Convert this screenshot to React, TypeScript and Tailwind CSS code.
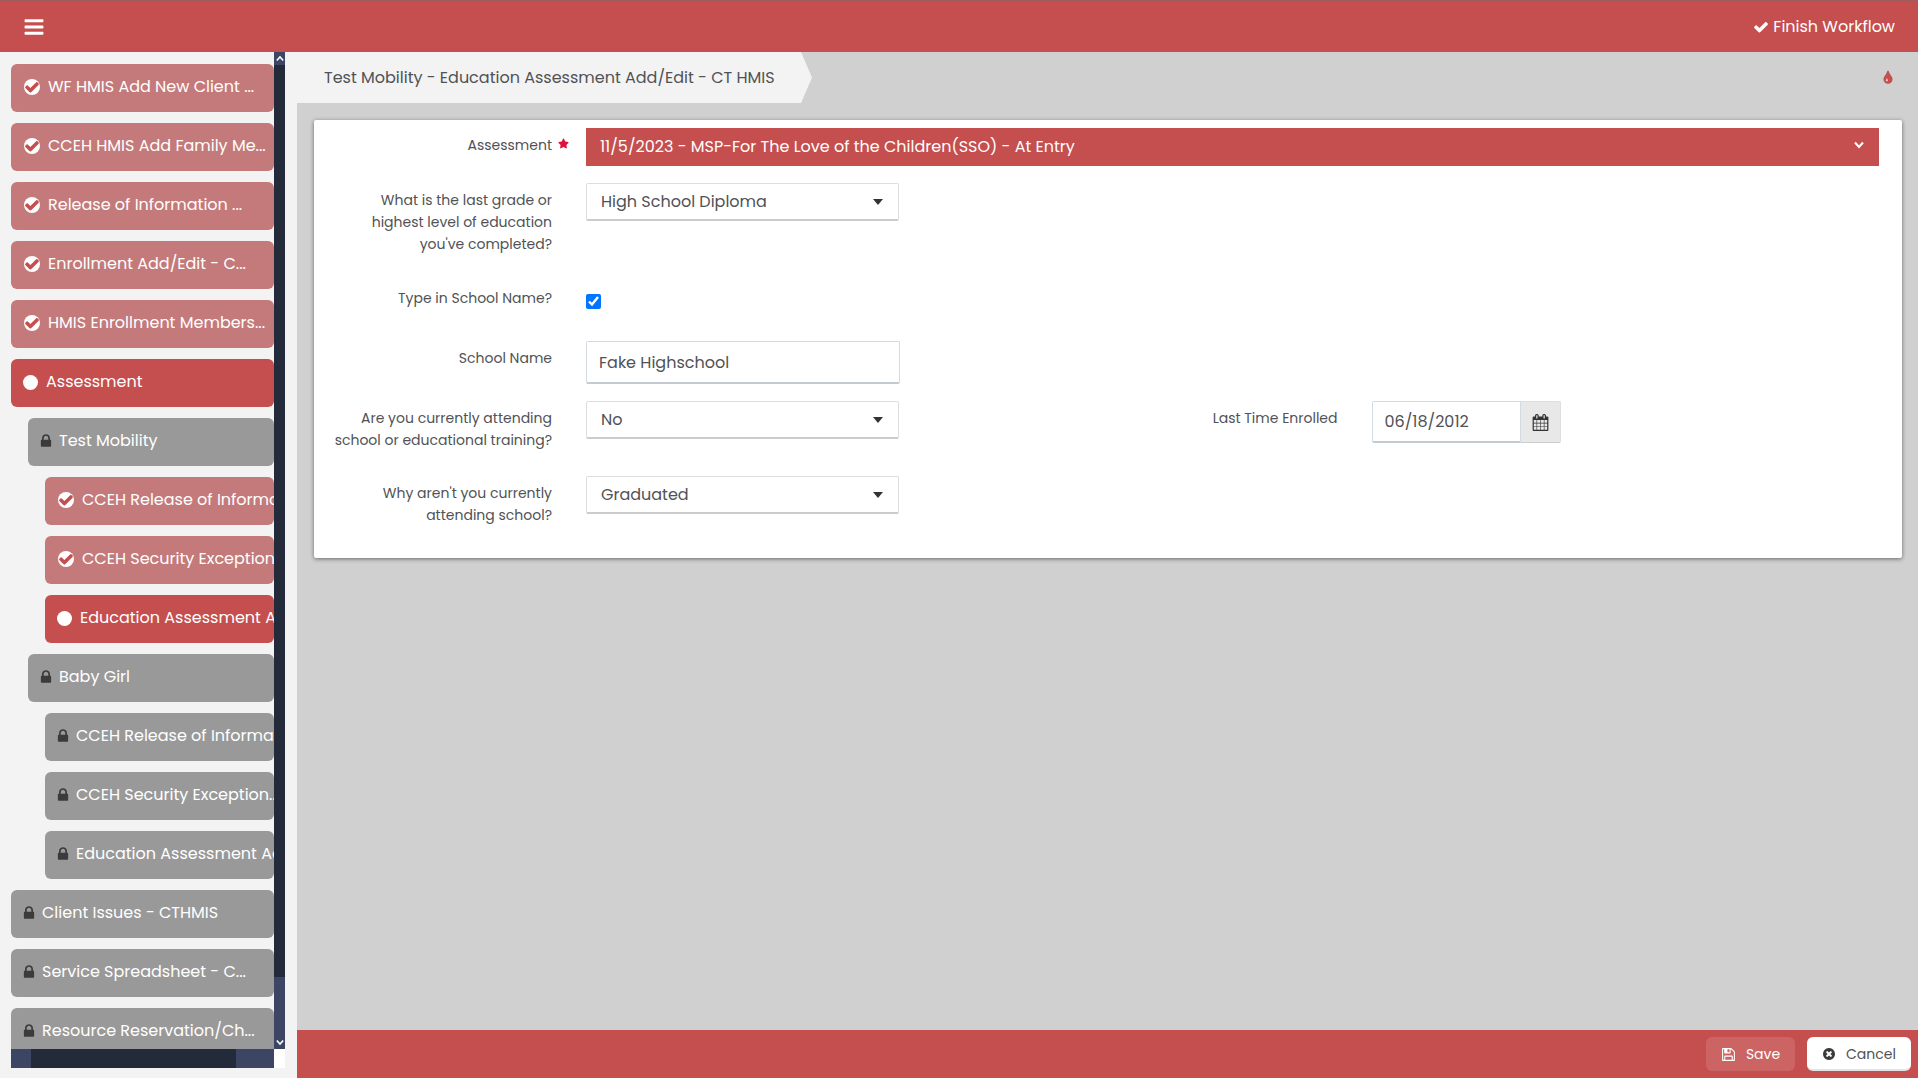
import type { ReactNode } from "react";
import clsx from "clsx";
import { FaStar } from "react-icons/fa";

type StepStatus = "done" | "active" | "locked";

type Step = {
  label: string;
  status: StepStatus;
  level: 0 | 1 | 2;
};

const steps: Step[] = [
  { label: "WF HMIS Add New Client ...", status: "done", level: 0 },
  { label: "CCEH HMIS Add Family Me...", status: "done", level: 0 },
  { label: "Release of Information ...", status: "done", level: 0 },
  { label: "Enrollment Add/Edit - C...", status: "done", level: 0 },
  { label: "HMIS Enrollment Members...", status: "done", level: 0 },
  { label: "Assessment", status: "active", level: 0 },
  { label: "Test Mobility", status: "locked", level: 1 },
  { label: "CCEH Release of Informa...", status: "done", level: 2 },
  { label: "CCEH Security Exception...", status: "done", level: 2 },
  { label: "Education Assessment Ad...", status: "active", level: 2 },
  { label: "Baby Girl", status: "locked", level: 1 },
  { label: "CCEH Release of Informa...", status: "locked", level: 2 },
  { label: "CCEH Security Exception...", status: "locked", level: 2 },
  { label: "Education Assessment Ad...", status: "locked", level: 2 },
  { label: "Client Issues - CTHMIS", status: "locked", level: 0 },
  { label: "Service Spreadsheet - C...", status: "locked", level: 0 },
  { label: "Resource Reservation/Ch...", status: "locked", level: 0 },
];

const paths = {
  bars: "M1664 1344v128q0 26-19 45t-45 19h-1408q-26 0-45-19t-19-45v-128q0-26 19-45t45-19h1408q26 0 45 19t19 45zm0-512v128q0 26-19 45t-45 19h-1408q-26 0-45-19t-19-45v-128q0-26 19-45t45-19h1408q26 0 45 19t19 45zm0-512v128q0 26-19 45t-45 19h-1408q-26 0-45-19t-19-45v-128q0-26 19-45t45-19h1408q26 0 45 19t19 45z",
  check:
    "M1671 566q0 40-28 68l-724 724-136 136q-28 28-68 28t-68-28l-136-136-362-362q-28-28-28-68t28-68l136-136q28-28 68-28t68 28l294 295 656-657q28-28 68-28t68 28l136 136q28 28 28 68z",
  lock: "M640 768h512v-192q0-106-75-181t-181-75-181 75-75 181v192zm832 96v576q0 40-28 68t-68 28h-960q-40 0-68-28t-28-68v-576q0-40 28-68t68-28h32v-192q0-184 132-316t316-132 316 132 132 316v192h32q40 0 68 28t28 68z",
  tint: "M896 1152q0-36-20-69-1-1-15.5-22.5t-25.5-38-25-44-21-50.5q-4-16-21-16t-21 16q-7 23-21 50.5t-25 44-25.5 38-15.5 22.5q-20 33-20 69 0 53 37.5 90.5t90.5 37.5 90.5-37.5 37.5-90.5zm512-128q0 212-150 362t-362 150-362-150-150-362q0-145 81-275 6-9 62.5-90.5t101-151 99.5-178 83-201.5q9-30 34-47t51-17 51.5 17 33.5 47q28 93 83 201.5t99.5 178 101 151 62.5 90.5q81 127 81 275z",
  calendar:
    "M192 1664h288v-288h-288v288zm352 0h320v-288h-320v288zm-352-352h288v-320h-288v320zm352 0h320v-320h-320v320zm-352-384h288v-288h-288v288zm736 736h320v-288h-320v288zm-384-736h320v-288h-320v288zm768 736h288v-288h-288v288zm-384-352h320v-320h-320v320zm-352-864v-288q0-13-9.5-22.5t-22.5-9.5h-64q-13 0-22.5 9.5t-9.5 22.5v288q0 13 9.5 22.5t22.5 9.5h64q13 0 22.5-9.5t9.5-22.5zm736 864h288v-320h-288v320zm-384-384h320v-288h-320v288zm384 0h288v-288h-288v288zm32-480v-288q0-13-9.5-22.5t-22.5-9.5h-64q-13 0-22.5 9.5t-9.5 22.5v288q0 13 9.5 22.5t22.5 9.5h64q13 0 22.5-9.5t9.5-22.5zm384-64v1280q0 52-38 90t-90 38h-1408q-52 0-90-38t-38-90v-1280q0-52 38-90t90-38h128v-96q0-66 47-113t113-47h64q66 0 113 47t47 113v96h384v-96q0-66 47-113t113-47h64q66 0 113 47t47 113v96h128q52 0 90 38t38 90z",
  floppy:
    "M512 1536h768v-384h-768v384zm896 0h128v-896q0-14-10-38.5t-20-34.5l-281-281q-10-10-34-20t-39-10v416q0 40-28 68t-68 28h-576q-40 0-68-28t-28-68v-416h-128v1280h128v-416q0-40 28-68t68-28h832q40 0 68 28t28 68v416zm-384-928v-320q0-13-9.5-22.5t-22.5-9.5h-192q-13 0-22.5 9.5t-9.5 22.5v320q0 13 9.5 22.5t22.5 9.5h192q13 0 22.5-9.5t9.5-22.5zm640 32v928q0 40-28 68t-68 28h-1344q-40 0-68-28t-28-68v-1344q0-40 28-68t68-28h928q40 0 88 20t76 48l280 280q28 28 48 76t20 88z",
  timesCircle:
    "M1277 1122q0-26-19-45l-181-181 181-181q19-19 19-45 0-27-19-46l-90-90q-19-18-46-18-26 0-45 18l-181 181-181-181q-19-18-45-18-27 0-46 18l-90 90q-19 19-19 46 0 26 19 45l181 181-181 181q-19 19-19 45 0 27 19 46l90 90q19 18 46 18 26 0 45-18l181-181 181 181q19 18 45 18 27 0 46-18l90-90q19-19 19-46zm387-226q0 209-103 385.5t-279.5 279.5-385.5 103-385.5-103-279.5-279.5-103-385.5 103-385.5 279.5-279.5 385.5-103 385.5 103 279.5 279.5 103 385.5z",
};

function Glyph({ name, className }: { name: keyof typeof paths; className?: string }) {
  return (
    <svg viewBox="0 0 1792 1792" fill="currentColor" aria-hidden="true" className={clsx("shrink-0", className)}>
      <path d={paths[name]} />
    </svg>
  );
}

function Chevron({ up, className }: { up?: boolean; className?: string }) {
  return (
    <svg viewBox="0 0 10 8" fill="none" stroke="currentColor" strokeWidth="2" aria-hidden="true" className={className}>
      <path d={up ? "M1 6.5 5 2l4 4.500" : "M1 1.500 5 6l4-4.500"} />
    </svg>
  );
}

function StepIcon({ status }: { status: StepStatus }) {
  if (status === "done") {
    return (
      <span className="flex h-4 w-4 shrink-0 items-center justify-center rounded-full bg-white">
        <Glyph name="check" className="h-4 w-4 text-[#c54e4e]" />
      </span>
    );
  }
  if (status === "active") {
    return <span className="h-[15px] w-[15px] shrink-0 rounded-full bg-white" />;
  }
  return (
    <span className="flex w-[11px] shrink-0 justify-center">
      <Glyph name="lock" className="h-4 w-4 text-[#3b3b3b]" />
    </span>
  );
}

function StepButton({ step }: { step: Step }) {
  return (
    <li
      className={clsx(
        step.level === 1 && "pl-[17px]",
        step.level === 2 && "pl-[34px]",
      )}
    >
      <button
        type="button"
        className={clsx(
          "flex h-12 w-full items-center gap-2 overflow-hidden rounded-md pb-0.5 text-left text-base whitespace-nowrap text-white",
          step.status === "done" && "bg-[#c47a7a] pl-[13px]",
          step.status === "active" && "bg-[#c54e4e] pl-3",
          step.status === "locked" && "bg-[#999999] pl-3",
        )}
      >
        <StepIcon status={step.status} />
        <span>{step.label}</span>
      </button>
    </li>
  );
}

function Sidebar() {
  return (
    <aside className="flex w-[297px] shrink-0 flex-col bg-[#f3f3f3] pb-[10px] pl-[11px]">
      <div className="flex min-h-0 flex-1">
        <nav aria-label="Workflow steps" className="w-[263px] overflow-hidden">
          <ul className="flex flex-col gap-[11px] pt-3">
            {steps.map((step, i) => (
              <StepButton key={i} step={step} />
            ))}
          </ul>
        </nav>
        <div className="flex w-[11px] flex-col items-center bg-[#3c4563] text-white">
          <Chevron up className="my-[3px] h-[7px] w-2" />
          <div className="w-full flex-1 bg-[#232a3a]" />
          <div className="flex h-[72px] items-end pb-[3px]">
            <Chevron className="h-[7px] w-2" />
          </div>
        </div>
      </div>
      <div className="flex h-[19px]">
        <div className="w-[263px] bg-[#3c4563] pr-[38px] pl-5">
          <div className="h-full bg-[#232a3a]" />
        </div>
        <div className="w-[11px] bg-white" />
      </div>
    </aside>
  );
}

function Field({
  id,
  label,
  required,
  children,
}: {
  id: string;
  label: string;
  required?: boolean;
  children: ReactNode;
}) {
  return (
    <div className="flex min-w-0 flex-1 items-start">
      <div className="flex w-[272px] shrink-0 pt-[6px]">
        <label htmlFor={id} className="w-[238px] pl-[15px] text-right text-sm leading-[22px]">
          {label}
        </label>
        {required ? <FaStar className="mt-1 ml-1.5 h-[11px] w-[11px] text-[#dc143c]" /> : null}
      </div>
      {children}
    </div>
  );
}

function Select({ id, value }: { id: string; value: string }) {
  return (
    <div className="relative w-[313px]">
      <select
        id={id}
        defaultValue={value}
        className="h-[38px] w-full appearance-none rounded-xs border border-b-2 border-[#dedede] border-b-[#cccccc] bg-white pr-8 pl-3.5 text-base"
      >
        <option>{value}</option>
      </select>
      <svg
        viewBox="0 0 10 6"
        fill="#333333"
        aria-hidden="true"
        className="pointer-events-none absolute top-4 right-4 h-1.5 w-2.5"
      >
        <path d="M0 0h10L5 6z" />
      </svg>
    </div>
  );
}

function AssessmentForm() {
  return (
    <form className="mt-[17px] mr-4 ml-[17px] flex flex-col rounded-xs bg-white pt-2 pb-8 shadow-[0_1px_4px_rgba(0,0,0,0.5)]">
      <div className="flex pr-[23px]">
        <Field id="assessment" label="Assessment" required>
          <div className="relative flex-1">
            <select
              id="assessment"
              className="h-[38px] w-full appearance-none bg-[#c54e4e] pr-10 pl-3.5 text-base text-white"
            >
              <option>11/5/2023 - MSP-For The Love of the Children(SSO) - At Entry</option>
            </select>
            <Chevron className="pointer-events-none absolute top-[13px] right-[15px] h-2 w-2.5 text-white" />
          </div>
        </Field>
      </div>

      <div className="flex h-[111px] pt-[17px] pr-[17px]">
        <Field id="grade" label="What is the last grade or highest level of education you've completed?">
          <Select id="grade" value="High School Diploma" />
        </Field>
        <div className="flex-1" />
      </div>

      <div className="flex pt-1 pr-[17px]">
        <Field id="type-name" label="Type in School Name?">
          <input id="type-name" type="checkbox" defaultChecked className="mt-[13px] h-[15px] w-[15px] accent-[#0075ff]" />
        </Field>
        <div className="flex-1" />
      </div>

      <div className="flex pt-8 pr-[17px]">
        <Field id="school-name" label="School Name">
          <input
            id="school-name"
            type="text"
            defaultValue="Fake Highschool"
            className="h-[43px] w-[314px] rounded-xs border border-b-2 border-[#d3dae3] border-b-[#c2cad4] px-3 text-base"
          />
        </Field>
        <div className="flex-1" />
      </div>

      <div className="flex h-[92px] pt-[17px] pr-[17px]">
        <Field id="attending" label="Are you currently attending school or educational training?">
          <Select id="attending" value="No" />
        </Field>
        <Field id="last-enrolled" label="Last Time Enrolled">
          <div className="flex h-[42px] w-[189px]">
            <input
              id="last-enrolled"
              type="text"
              defaultValue="06/18/2012"
              className="min-w-0 flex-1 rounded-l-xs border border-b-2 border-[#d3dae3] border-b-[#c2cad4] px-3 text-base"
            />
            <button
              type="button"
              aria-label="Pick a date"
              className="flex w-10 items-center justify-center rounded-r-xs border border-l-0 border-[#dedede] border-b-[#cccccc] bg-[#e8e8e8] text-[#333333]"
            >
              <Glyph name="calendar" className="h-[17px] w-[17px]" />
            </button>
          </div>
        </Field>
      </div>

      <div className="flex pr-[17px]">
        <Field id="why" label="Why aren't you currently attending school?">
          <Select id="why" value="Graduated" />
        </Field>
        <div className="flex-1" />
      </div>
    </form>
  );
}

export default function App() {
  return (
    <div className="flex h-screen flex-col overflow-hidden bg-[#d0d0d0] font-[Poppins,Inter,sans-serif] text-[#505256]">
      <header className="flex h-[52px] shrink-0 items-center justify-between border-t border-[#a05b5f] bg-[#c54e4e] pr-[23px] pl-[23px] text-white">
        <button type="button" aria-label="Menu">
          <Glyph name="bars" className="h-[22px] w-[22px]" />
        </button>
        <button type="button" className="flex items-center gap-1 text-base">
          <Glyph name="check" className="h-4 w-4" />
          Finish Workflow
        </button>
      </header>

      <div className="flex min-h-0 flex-1">
        <Sidebar />
        <div className="flex min-w-0 flex-1 flex-col">
          <main className="min-h-0 flex-1">
            <div className="flex h-[51px] items-center justify-between pr-[22px]">
              <h1 className="flex h-full w-[515px] items-center bg-[#f3f3f3] pl-[27px] text-base whitespace-nowrap [clip-path:polygon(0_0,calc(100%-11px)_0,100%_50%,calc(100%-11px)_100%,0_100%)]">
                Test Mobility - Education Assessment Add/Edit - CT HMIS
              </h1>
              <button type="button" aria-label="Theme color" className="text-[#c54e4e]">
                <Glyph name="tint" className="h-4 w-4" />
              </button>
            </div>
            <AssessmentForm />
          </main>

          <footer className="flex h-12 shrink-0 items-center justify-end gap-3 bg-[#c54e4e] pr-[7px] text-sm">
            <button
              type="button"
              className="flex h-[34px] w-[89px] items-center justify-center gap-2.5 rounded-md bg-[#cd6464] text-white"
            >
              <Glyph name="floppy" className="h-[15px] w-[15px]" />
              Save
            </button>
            <button
              type="button"
              className="flex h-[34px] w-[104px] items-center justify-center gap-2.5 rounded-md border-b-2 border-[#e4e4e4] bg-white pt-0.5"
            >
              <Glyph name="timesCircle" className="h-[14px] w-[14px] text-[#3b3b3b]" />
              Cancel
            </button>
          </footer>
        </div>
      </div>
    </div>
  );
}
